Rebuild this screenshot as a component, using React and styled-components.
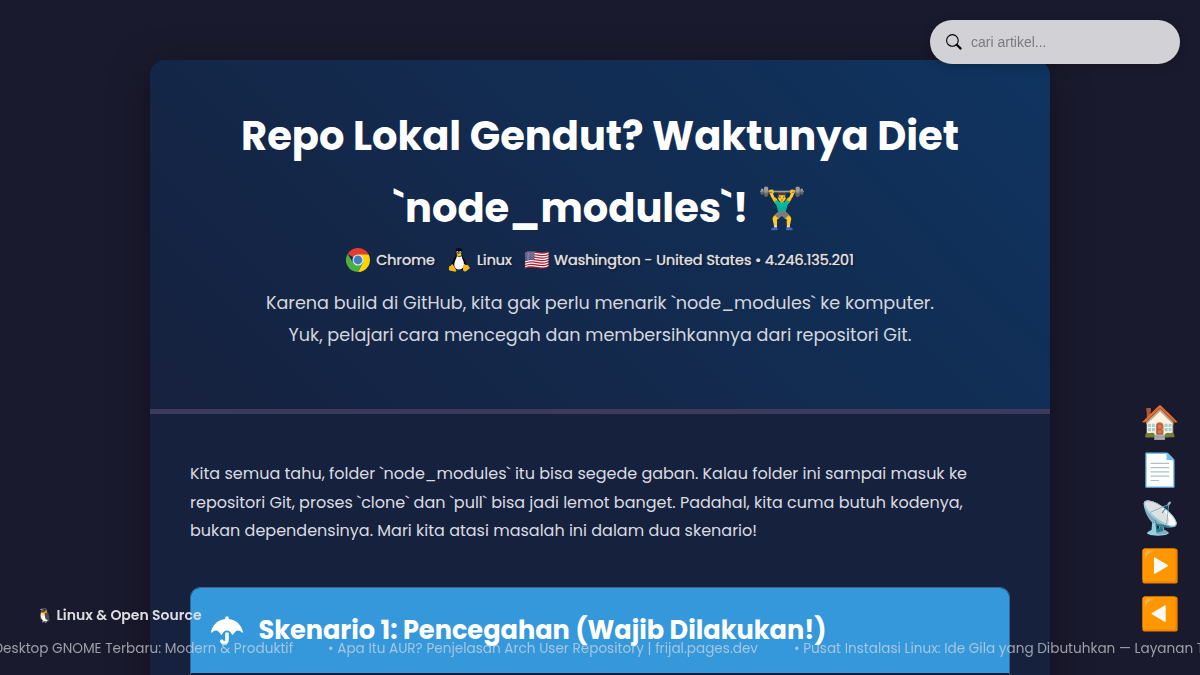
import React from "react";
import styled, { createGlobalStyle } from "styled-components";
import { FaUmbrella } from "react-icons/fa";

const Global = createGlobalStyle`
  *, *::before, *::after { box-sizing: border-box; }
  html, body { margin: 0; height: 675px; overflow: hidden; background: #1a1a2e; }
  body { font-family: Poppins, Inter, "Noto Color Emoji", sans-serif; color: #e0e0e0; line-height: 1.8; font-size: 16px; }
`;

const Page = styled.div`
  height: 675px;
  padding-top: 60px;
  overflow: hidden;
`;

const Article = styled.article`
  width: 900px;
  height: 900px;
  margin: 0 auto;
  background: #16213e;
  border-radius: 15px;
  overflow: hidden;
  box-shadow: 0 10px 40px rgba(0, 0, 0, 0.4);
`;

const Header = styled.header`
  height: 354px;
  padding-top: 40px;
  background: linear-gradient(45deg, #16213e, #0f3460);
  border-bottom: 5px solid #3e3a5e;
  text-align: center;
`;

const Line = styled.span`
  display: block;
  white-space: pre;
`;

const Title = styled.h1`
  margin: 0;
  font-size: 40px;
  line-height: 72px;
  font-weight: 700;
  color: #fff;
`;

const Visitor = styled.div`
  display: flex;
  justify-content: center;
  align-items: center;
  height: 33px;
  font-size: 14.4px;
  font-weight: 400;
  text-shadow: 0 0 1px rgba(255, 255, 255, 0.8), 1px 1px 2px rgba(0, 0, 0, 0.8);
`;

const VisitorItem = styled.span`
  display: flex;
  align-items: center;
  gap: 6px;
  margin-right: ${(p) => p.$after || 0}px;
  svg { display: block; width: 24px; height: 24px; }
`;

const Flag = styled.span`
  width: 24px;
  font-size: 20.5px;
  line-height: 24px;
  text-shadow: none;
`;

const Lead = styled.p`
  margin: 10px 0 0;
  font-size: 17.6px;
  line-height: 32px;
  color: #d3d7de;
`;

const Intro = styled.p`
  margin: 46.1px 40px 0;
  line-height: 28.45px;
  color: #dadce0;
`;

const Scenario = styled.section`
  margin: 41.4px 40px 0;
  height: 300px;
  border: 1px solid #3a6596;
  border-radius: 10px;
  overflow: hidden;
  background: #0f1a38;
`;

const ScenarioHead = styled.h2`
  margin: 0;
  height: 85px;
  padding: 0 20px;
  display: flex;
  align-items: center;
  gap: 15.4px;
  background: #3498db;
  color: #fff;
  font-size: 25.6px;
  font-weight: 700;
  svg { width: 32px; height: 29px; }
`;

const Search = styled.label`
  position: fixed;
  top: 20px;
  right: 20px;
  width: 250px;
  height: 44px;
  display: flex;
  align-items: center;
  gap: 9px;
  padding: 0 16px;
  border-radius: 22px;
  background: #d2d2d6;
  color: #000;
  box-shadow: 0 2px 10px rgba(0, 0, 0, 0.25);
  input {
    flex: 1;
    min-width: 0;
    padding: 0;
    border: 0;
    outline: 0;
    background: transparent;
    font: 14px "Liberation Sans", sans-serif;
  }
  input::placeholder { color: #7b7b7d; opacity: 1; }
`;

const SideNav = styled.nav`
  position: fixed;
  right: 20px;
  top: 398px;
  width: 40px;
  display: flex;
  flex-direction: column;
  align-items: center;
`;

const NavButton = styled.a`
  height: 48px;
  line-height: 48px;
  font-size: 32px;
`;

const Category = styled.div`
  position: fixed;
  left: 36px;
  top: 602px;
  display: flex;
  gap: 3px;
  font-size: 14px;
  font-weight: 600;
  line-height: 26px;
  color: #dedee2;
  white-space: pre;
`;

const Ticker = styled.div`
  position: fixed;
  left: 0;
  top: 636px;
  width: 1200px;
  overflow: hidden;
  display: flex;
  font-size: 13.6px;
  line-height: 25px;
  color: rgba(220, 220, 225, 0.68);
`;

const TickerItem = styled.span`
  flex: none;
  width: ${(p) => p.$w}px;
  margin-left: ${(p) => p.$x || 0}px;
  white-space: pre;
`;

const SearchIcon = () => (
  <svg width="16" height="16" viewBox="0 0 16 16" fill="none" stroke="currentColor">
    <circle cx="6.400" cy="6.400" r="5.800" strokeWidth="1.100" />
    <path d="M10.300 10.300 15.200 15.100" strokeWidth="2.200" />
  </svg>
);

const Chrome = () => (
  <svg viewBox="0 0 48 48">
    <path d="M24 24 3.2 12A24 24 0 0 1 44.8 12Z" fill="#e33b2e" />
    <path d="M24 13H45.3A24 24 0 0 1 24 48L33.5 29.500Z" fill="#fcd209" />
    <path d="M3.200 12A24 24 0 0 0 24 48L33.500 29.500 24 34 14.500 29.500Z" fill="#4caf3f" />
    <circle cx="24" cy="24" r="11" fill="#e8eef2" />
    <circle cx="24" cy="24" r="8.800" fill="#3f7fc4" />
  </svg>
);

const Tux = () => (
  <svg viewBox="0 0 48 48">
    <path d="M24 0c-5.500 0-7 4-6.500 10 .3 5-1 7-3.500 11-3 5-5 10-4 16l8 7h12l8-7c1-7-1-11-4.500-16-3-4-3.500-6-3.500-11C30 3.500 28.500 0 24 0Z" fill="#080808" />
    <path d="M20 16c-1 5-5.500 11-5.500 17 0 7 4.500 10 9.500 10s10-3 10-10c0-7-4-12-5-17-3 3-6 3-9 0Z" fill="#fff" />
    <ellipse cx="21" cy="9" rx="2" ry="2.800" fill="#ddd" />
    <ellipse cx="26.500" cy="9" rx="2.300" ry="3" fill="#ddd" />
    <circle cx="21.300" cy="9.500" r="1.200" />
    <circle cx="26.200" cy="9.500" r="1.200" />
    <path d="M19 13.500c2-2 3-2.500 5-2.500s4 1 5.500 2.500c-2 3-3.500 3.500-5.500 3.500s-4-1-5-3.500Z" fill="#f5b90f" />
    <path d="M10 32c2 0 5 7 8 11 2 3 0 5-4 4L5 45c-2-1-1-4-1-7 1-3 4-1 6-6Z" fill="#f7b90d" />
    <path d="M36 32c-3 0-4 4-4 11 1 5 5 5 8 2l5-4c2-2-1-3-2-5-1-4-1-1-3-2-2 0-3 1-4-2Z" fill="#f7b90d" />
  </svg>
);

export default function App() {
  return (
    <>
      <Global />
      <Page>
        <Article>
          <Header>
            <Title>
              <Line>Repo Lokal Gendut? Waktunya Diet</Line>
              <Line>`node_modules`! 🏋️‍♂️</Line>
            </Title>
            <Visitor>
              <VisitorItem $after={12}><Chrome /><Line>Chrome</Line></VisitorItem>
              <VisitorItem $after={12}><Tux /><Line>Linux</Line></VisitorItem>
              <VisitorItem><Flag>🇺🇸</Flag><Line>Washington - United States • 4.246.135.201</Line></VisitorItem>
            </Visitor>
            <Lead>
              <Line>Karena build di GitHub, kita gak perlu menarik `node_modules` ke komputer.</Line>
              <Line>Yuk, pelajari cara mencegah dan membersihkannya dari repositori Git.</Line>
            </Lead>
          </Header>
          <Intro>
            <Line>Kita semua tahu, folder `node_modules` itu bisa segede gaban. Kalau folder ini sampai masuk ke</Line>
            <Line>repositori Git, proses `clone` dan `pull` bisa jadi lemot banget. Padahal, kita cuma butuh kodenya,</Line>
            <Line>bukan dependensinya. Mari kita atasi masalah ini dalam dua skenario!</Line>
          </Intro>
          <Scenario>
            <ScenarioHead><FaUmbrella /><Line>Skenario 1: Pencegahan (Wajib Dilakukan!)</Line></ScenarioHead>
          </Scenario>
        </Article>
      </Page>
      <Search><SearchIcon /><input placeholder="cari artikel..." /></Search>
      <SideNav>
        {["🏠", "📄", "📡", "▶️", "◀️"].map((icon) => <NavButton key={icon}>{icon}</NavButton>)}
      </SideNav>
      <Category><span>🐧</span><Line>Linux &amp; Open Source</Line></Category>
      <Ticker>
        <TickerItem $x={-6.5} $w={334.5}>Desktop GNOME Terbaru: Modern &amp; Produktif</TickerItem>
        <TickerItem $w={466}>• Apa Itu AUR? Penjelasan Arch User Repository | frijal.pages.dev</TickerItem>
        <TickerItem $w={500}>• Pusat Instalasi Linux: Ide Gila yang Dibutuhkan — Layanan Terbaik</TickerItem>
      </Ticker>
    </>
  );
}
